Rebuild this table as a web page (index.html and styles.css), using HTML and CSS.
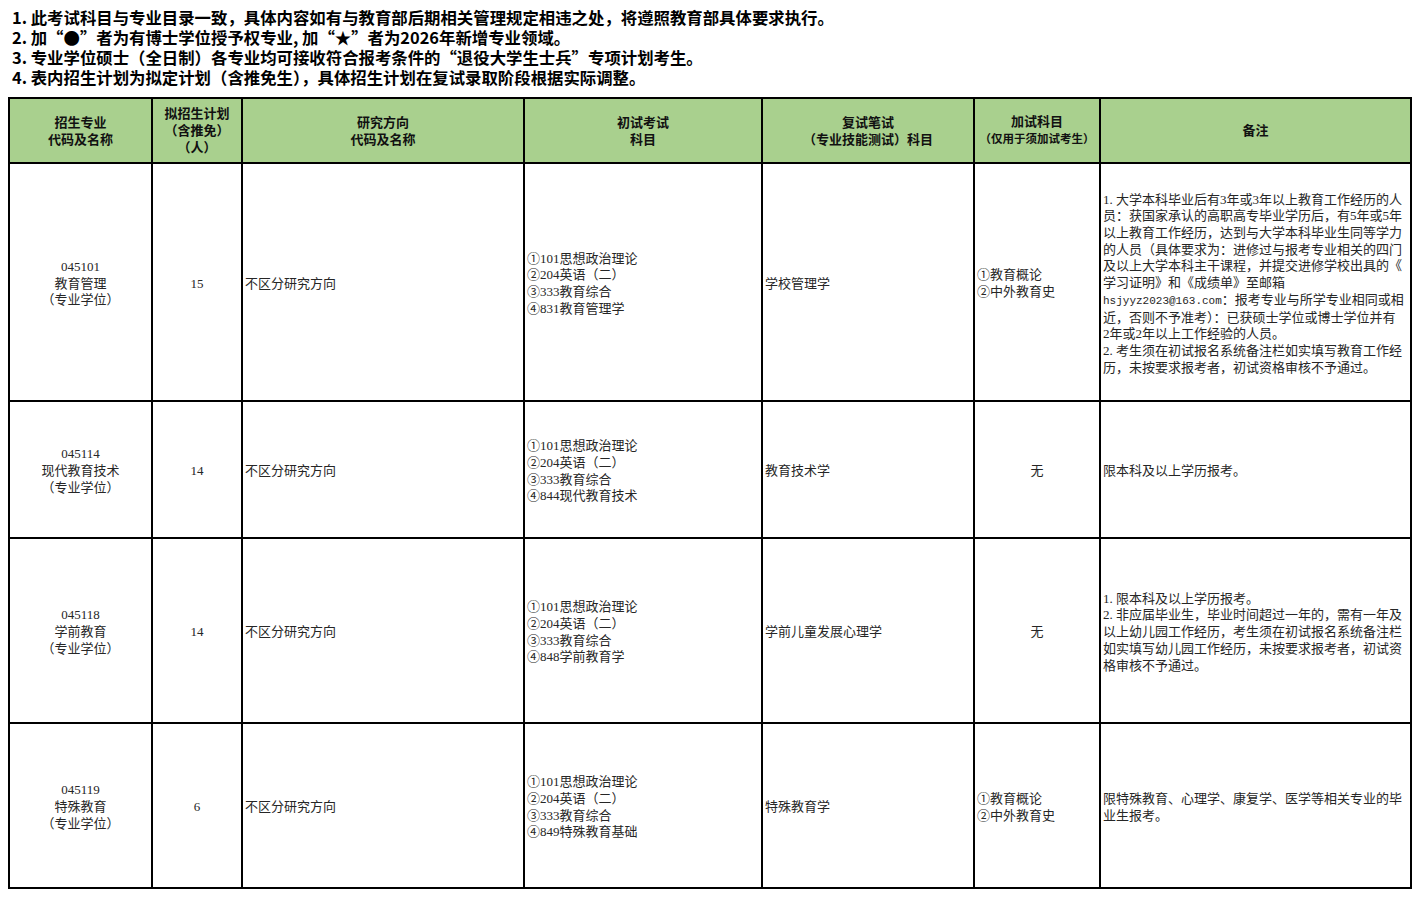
FILE: index.html
```html
<!DOCTYPE html>
<html lang="zh-CN">
<head>
<meta charset="utf-8">
<title>招生专业目录</title>
<link rel="stylesheet" href="styles.css">
</head>
<body>
<div class="intro">
  <p>1. 此考试科目与专业目录一致，具体内容如有与教育部后期相关管理规定相违之处，将遵照教育部具体要求执行。</p>
  <p>2. 加“●”者为有博士学位授予权专业, 加“★”者为2026年新增专业领域。</p>
  <p>3. 专业学位硕士（全日制）各专业均可接收符合报考条件的“退役大学生士兵”专项计划考生。</p>
  <p>4. 表内招生计划为拟定计划（含推免生），具体招生计划在复试录取阶段根据实际调整。</p>
</div>

<div class="grid">
  <div class="th"><div>招生专业<br>代码及名称</div></div>
  <div class="th"><div>拟招生计划<br>（含推免）<br>（人）</div></div>
  <div class="th"><div>研究方向<br>代码及名称</div></div>
  <div class="th"><div>初试考试<br>科目</div></div>
  <div class="th"><div>复试笔试<br>（专业技能测试）科目</div></div>
  <div class="th"><div>加试科目<br><span class="small">（仅用于须加试考生）</span></div></div>
  <div class="th"><div>备注</div></div>

  <div class="td c"><div>045101<br>教育管理<br>（专业学位）</div></div>
  <div class="td c"><div>15</div></div>
  <div class="td l"><div>不区分研究方向</div></div>
  <div class="td l"><div>①101思想政治理论<br>②204英语（二）<br>③333教育综合<br>④831教育管理学</div></div>
  <div class="td l"><div>学校管理学</div></div>
  <div class="td l"><div>①教育概论<br>②中外教育史</div></div>
  <div class="td l"><div>1. 大学本科毕业后有3年或3年以上教育工作经历的人<br>员：获国家承认的高职高专毕业学历后，有5年或5年<br>以上教育工作经历，达到与大学本科毕业生同等学力<br>的人员（具体要求为：进修过与报考专业相关的四门<br>及以上大学本科主干课程，并提交进修学校出具的《<br>学习证明》和《成绩单》至邮箱<br><span class="mono">hsjyyz2023@163.com</span>：报考专业与所学专业相同或相<br>近，否则不予准考）：已获硕士学位或博士学位并有<br>2年或2年以上工作经验的人员。<br>2. 考生须在初试报名系统备注栏如实填写教育工作经<br>历，未按要求报考者，初试资格审核不予通过。</div></div>

  <div class="td c"><div>045114<br>现代教育技术<br>（专业学位）</div></div>
  <div class="td c"><div>14</div></div>
  <div class="td l"><div>不区分研究方向</div></div>
  <div class="td l"><div>①101思想政治理论<br>②204英语（二）<br>③333教育综合<br>④844现代教育技术</div></div>
  <div class="td l"><div>教育技术学</div></div>
  <div class="td c"><div>无</div></div>
  <div class="td l"><div>限本科及以上学历报考。</div></div>

  <div class="td c"><div>045118<br>学前教育<br>（专业学位）</div></div>
  <div class="td c"><div>14</div></div>
  <div class="td l"><div>不区分研究方向</div></div>
  <div class="td l"><div>①101思想政治理论<br>②204英语（二）<br>③333教育综合<br>④848学前教育学</div></div>
  <div class="td l"><div>学前儿童发展心理学</div></div>
  <div class="td c"><div>无</div></div>
  <div class="td l"><div>1. 限本科及以上学历报考。<br>2. 非应届毕业生，毕业时间超过一年的，需有一年及<br>以上幼儿园工作经历，考生须在初试报名系统备注栏<br>如实填写幼儿园工作经历，未按要求报考者，初试资<br>格审核不予通过。</div></div>

  <div class="td c"><div>045119<br>特殊教育<br>（专业学位）</div></div>
  <div class="td c"><div>6</div></div>
  <div class="td l"><div>不区分研究方向</div></div>
  <div class="td l"><div>①101思想政治理论<br>②204英语（二）<br>③333教育综合<br>④849特殊教育基础</div></div>
  <div class="td l"><div>特殊教育学</div></div>
  <div class="td l"><div>①教育概论<br>②中外教育史</div></div>
  <div class="td l"><div>限特殊教育、心理学、康复学、医学等相关专业的毕<br>业生报考。</div></div>
</div>
</body>
</html>
```

FILE: styles.css
```css
html, body {
  margin: 0;
  padding: 0;
  background: #ffffff;
}

body {
  padding: 7px 8px 8px;
  width: 1404px;
  font-family: "Liberation Serif", "Noto Sans CJK SC", serif;
  color: #000;
}

.intro {
  padding-left: 4px;
  font-family: "Noto Sans CJK SC", sans-serif;
  font-size: 16.4px;
  font-weight: bold;
  line-height: 20px;
}

.intro p {
  margin: 0;
  height: 20px;
  white-space: nowrap;
}

.grid {
  margin-top: 10px;
  display: grid;
  grid-template-columns: 141px 88px 280px 236px 210px 124px 309px;
  grid-template-rows: 63px 236px 135px 183px 163px;
  gap: 2px;
  padding: 2px;
  background: #000;
  width: 1400px;
}

.th {
  background: #a9d08e;
  display: flex;
  align-items: center;
  justify-content: center;
  text-align: center;
  font-size: 13px;
  font-weight: bold;
  line-height: 17px;
  color: #111;
  white-space: nowrap;
}

.th .small {
  font-size: 11.5px;
}

.td {
  background: #fff;
  display: flex;
  align-items: center;
  padding-top: 4px;
  font-size: 13px;
  line-height: 16.7px;
  color: #262626;
  white-space: nowrap;
}

.td.c {
  justify-content: center;
  text-align: center;
}

.td.l {
  justify-content: flex-start;
  text-align: left;
  padding-left: 2px;
}

.mono {
  font-family: "Liberation Mono", monospace;
  font-size: 11px;
}
```
